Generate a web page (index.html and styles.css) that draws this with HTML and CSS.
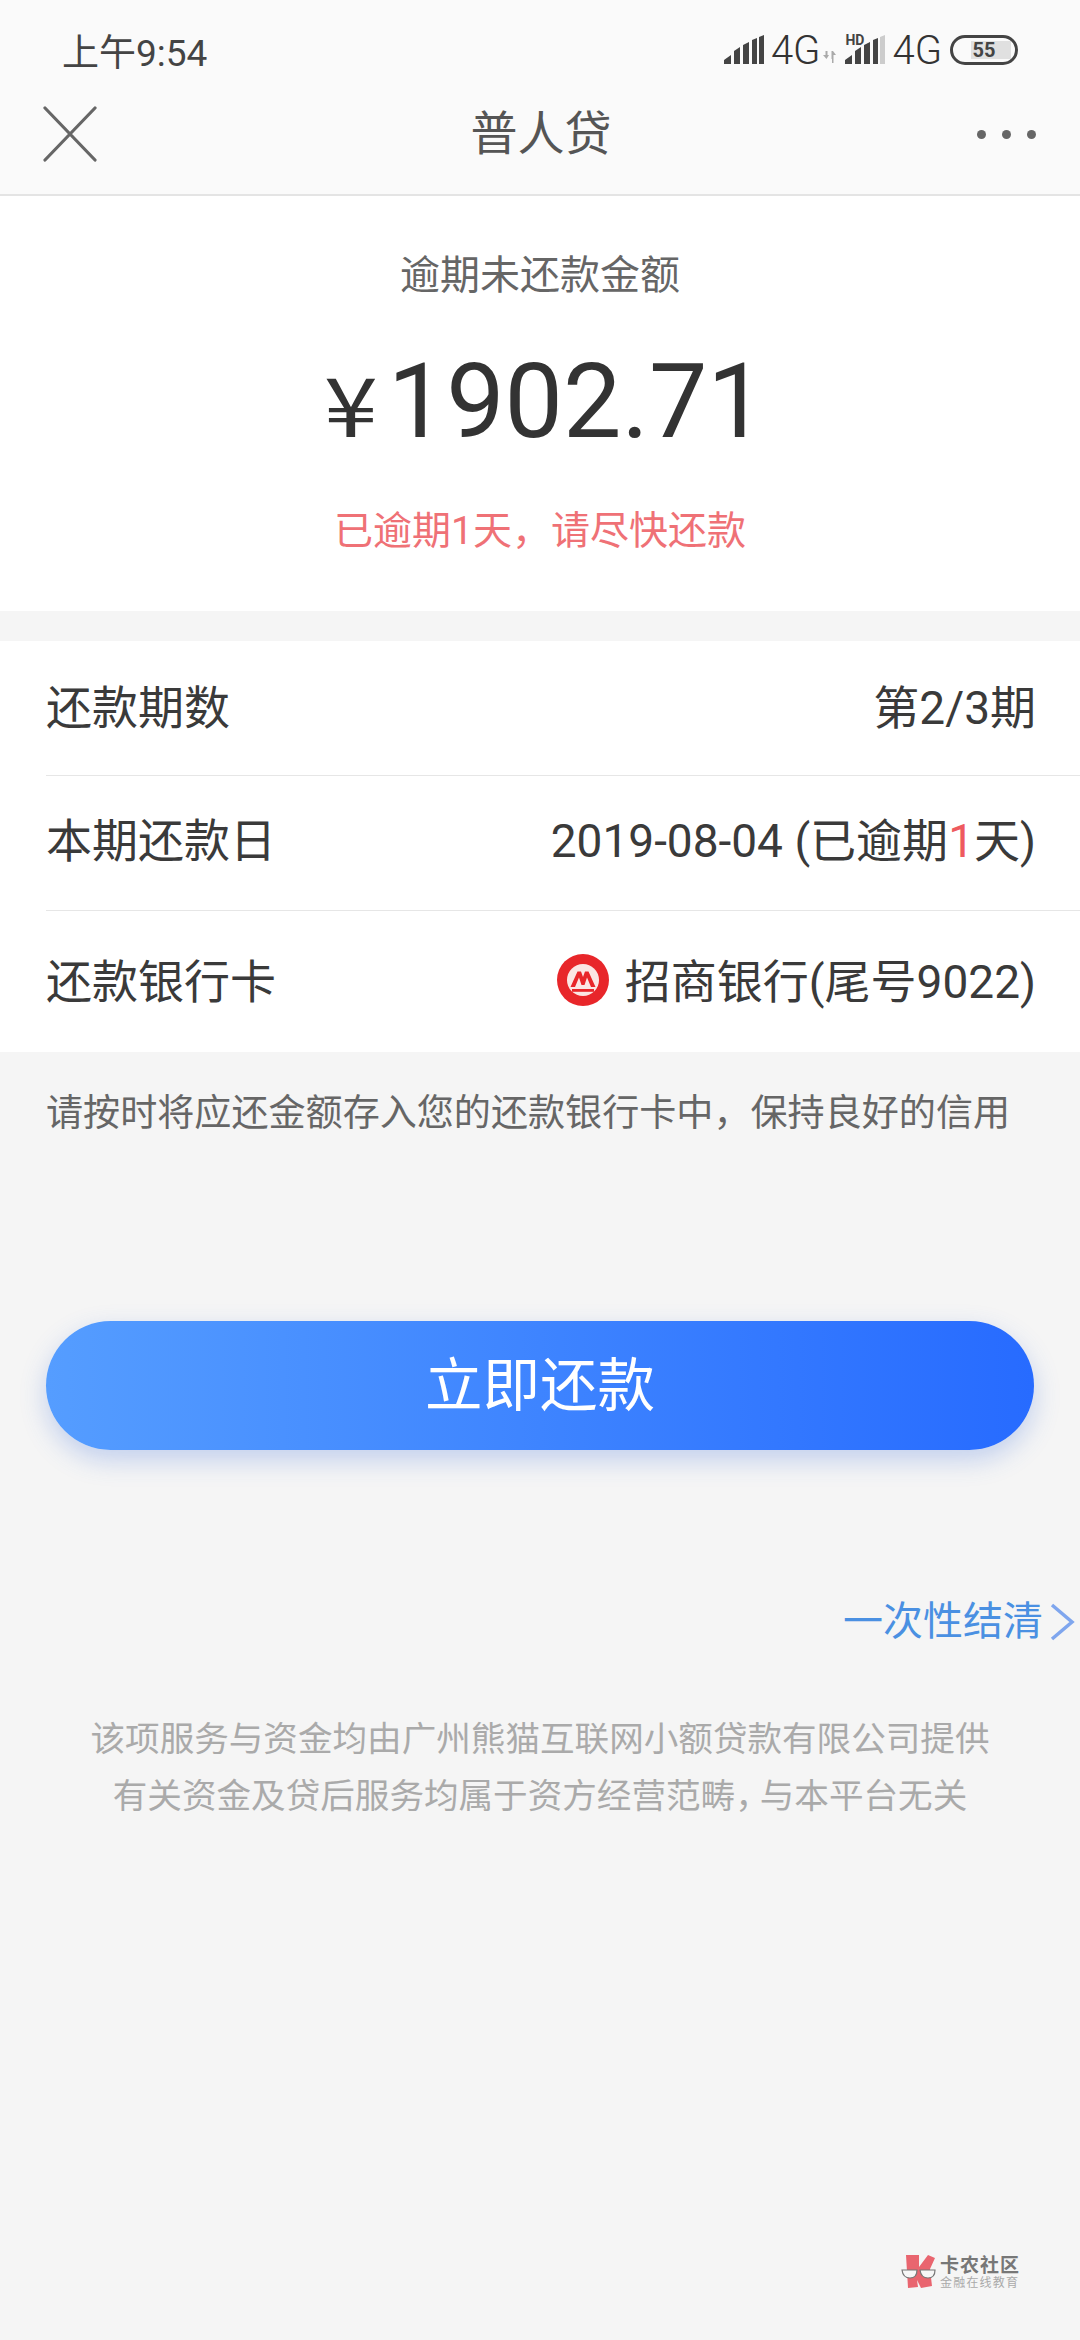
FILE: index.html
```html
<!DOCTYPE html>
<html lang="zh-CN">
<head>
<meta charset="utf-8">
<title>普人贷</title>
<link rel="stylesheet" href="styles.css">
</head>
<body>
<div class="page">
  <header class="top">
    <div class="status">
      <span class="time">上午9:54</span>
      <div class="status-right">
        <svg class="signal" width="40" height="29" viewBox="0 0 40 29"><path fill="#444" d="M0 29v-4l7-5v9zM10 29V16l6-4v17zM19 29V10l6-3v22zM28 29V5l5-2v26zM35 29V2l5-2v29z"/></svg>
        <span class="net">4G</span>
        <svg class="arrows" width="13" height="12" viewBox="0 0 13 12"><path fill="#aaa" d="M0 4h2.500V0h2v4H6L3.500 8zM7 8h1.500V0h1.500l3 4h-2.500v8H9V8z"/></svg>
        <div class="hd-signal">
          <span class="hd">HD</span>
          <svg class="signal-hd" width="40" height="29" viewBox="0 0 40 29"><path fill="#444" d="M0 29v-4l7-5v9zM10 29V16l6-4v17zM19 29V10l6-3v22zM28 29V5l5-2v26z"/><path fill="#ccc" d="M35 29V2l5-2v29z"/></svg>
        </div>
        <span class="net net-two">4G</span>
        <div class="battery"><span class="battery-num">55</span></div>
      </div>
    </div>
    <nav class="nav">
      <svg class="close" width="54" height="56" viewBox="0 0 54 56"><path d="M2 2l50 52M52 2L2 54" stroke="#666" stroke-width="3.200" stroke-linecap="round" fill="none"/></svg>
      <h1 class="title">普人贷</h1>
      <div class="dots"><i></i><i></i><i></i></div>
    </nav>
  </header>

  <section class="summary">
    <p class="summary-label">逾期未还款金额</p>
    <p class="amount"><span class="yen">¥</span><span class="digits">1902.71</span></p>
    <p class="overdue">已逾期1天，请尽快还款</p>
  </section>

  <section class="list">
    <div class="row"><span>还款期数</span><span>第2/3期</span></div>
    <div class="row row-date"><span>本期还款日</span><span>2019-08-04 (已逾期<em>1</em>天)</span></div>
    <div class="row row-last">
      <span>还款银行卡</span>
      <span class="bank">
        <svg class="bank-logo" width="52" height="52" viewBox="0 0 52 52">
          <circle cx="26" cy="26" r="26" fill="#e8262a"/>
          <circle cx="26" cy="26" r="16" fill="#fbe6e4"/>
          <path fill="#e8262a" d="M13.500 33L20.500 17.500h3.500L26 23l2-5.500h3.500L38.500 33h-4.500L30 23.500 27.500 31h-3L22 23.500 18 33z"/>
          <path fill="#e8262a" d="M15 35h22v2.800H15z"/>
        </svg>
        <span>招商银行(尾号9022)</span>
      </span>
    </div>
  </section>

  <p class="note">请按时将应还金额存入您的还款银行卡中，保持良好的信用</p>

  <button class="pay">立即还款</button>

  <div class="settle">
    <span>一次性结清</span>
    <svg class="chevron" width="25" height="38" viewBox="0 0 25 38"><path d="M2 2l20 17L2 36" stroke="#7fa6ee" stroke-width="3.500" fill="none"/></svg>
  </div>

  <p class="legal">该项服务与资金均由广州熊猫互联网小额贷款有限公司提供<br>有关资金及贷后服务均属于资方经营范畴<span class="tight">，</span>与本平台无关</p>

  <div class="watermark">
    <svg class="wm-logo" width="36" height="36" viewBox="0 0 36 36">
      <path fill="#e9656f" d="M5 1h13v12l9-12 7 3-5 11 2 17-11 2-4-8 1 7-10 1z"/>
      <path fill="#f7f7f7" stroke="#777" stroke-width="1.200" d="M1 16h15q0 8-7 8t-8-8zM19 16h15q0 8-7 8t-8-8z"/>
    </svg>
    <div class="wm-text">
      <span class="wm-name">卡农社区</span>
      <span class="wm-sub">金融在线教育</span>
    </div>
  </div>
</div>
</body>
</html>
```

FILE: styles.css
```css
* { box-sizing: border-box; }
html, body { margin: 0; padding: 0; }
body {
  background: #f5f5f5;
  font-family: Roboto, "Noto Sans CJK SC", sans-serif;
  color: #333;
}
.page { width: 1080px; height: 2340px; overflow: hidden; }
p, h1 { margin: 0; font-weight: 400; }

.top {
  height: 196px;
  background: #fafafa;
  border-bottom: 2px solid #e4e4e4;
}
.status {
  height: 100px;
  padding: 33px 62px 0 62px;
  display: flex;
  justify-content: space-between;
  align-items: flex-start;
}
.time { font-size: 37px; line-height: 42px; color: #444; }
.status-right { display: flex; align-items: flex-start; margin-top: 2px; margin-left: auto; }
.signal { display: block; }
.net { font-size: 40px; line-height: 32px; font-weight: 300; color: #333; margin-left: 7px; }
.net-two { margin-left: 7px; }
.arrows { margin: 16px 0 0 3px; }
.hd-signal { width: 40px; height: 29px; margin-left: 9px; display: flex; }
.hd { font-size: 14px; line-height: 12px; font-weight: 700; color: #444; margin-top: -1px; width: 0; }
.signal-hd { display: block; }
.battery {
  width: 68px;
  height: 30px;
  margin-left: 8px;
  border: 3px solid #444;
  border-radius: 15px;
  background: linear-gradient(#e0e0e0, #e0e0e0) 18px 3px / 40px 18px no-repeat;
  display: flex;
  align-items: center;
  justify-content: center;
}
.battery-num { font-size: 20px; font-weight: 700; line-height: 24px; color: #444; }

.nav {
  height: 94px;
  padding: 0 44px 26px 43px;
  display: grid;
  grid-template-columns: 1fr auto 1fr;
  align-items: center;
}
.close { display: block; }
.title { font-size: 47px; line-height: 60px; color: #555; margin-left: 3px; }
.dots { display: flex; gap: 16px; justify-self: end; }
.dots i { width: 9px; height: 9px; border-radius: 50%; background: #666; display: block; }

.summary {
  height: 415px;
  background: #fff;
  padding-top: 53px;
  text-align: center;
}
.summary-label { font-size: 40px; line-height: 54px; color: #666; }
.amount {
  margin-top: 34px;
  height: 130px;
  padding-left: 14px;
  display: flex;
  justify-content: center;
  align-items: baseline;
  line-height: 130px;
  color: #333;
}
.yen {
  font-family: "Noto Sans CJK SC", sans-serif;
  font-size: 82px;
  line-height: 130px;
  margin-right: 14px;
  transform: scaleX(1.18);
}
.digits { font-size: 104px; }
.overdue { margin-top: 37px; font-size: 39px; line-height: 54px; color: #ef7176; }

.list { margin-top: 30px; background: #fff; padding-left: 46px; height: 411px; }
.row {
  height: 135px;
  padding: 0 44px 9px 0;
  border-bottom: 1px solid #e6e6e6;
  display: flex;
  justify-content: space-between;
  align-items: center;
  font-size: 46px;
  color: #3a3a3a;
}
.row-date { padding-bottom: 13px; }
.row-last { height: 141px; border-bottom: 0; padding-bottom: 7px; }
.row em { font-style: normal; color: #ee5a5f; }
.bank { display: flex; align-items: center; gap: 16px; }
.bank-logo { display: block; margin-top: 4px; }

.note { margin: 37px 0 0 46px; font-size: 37.100px; line-height: 50px; color: #666; white-space: nowrap; }

.pay {
  display: block;
  width: 988px;
  height: 129px;
  margin: 182px 0 0 46px;
  padding: 0 0 10px;
  border: 0;
  border-radius: 65px;
  background: linear-gradient(90deg, #559dff, #276bff);
  box-shadow: 0 10px 26px rgba(60, 110, 220, 0.28);
  color: #fff;
  font-family: inherit;
  font-size: 57.500px;
}

.settle {
  margin-top: 145px;
  padding-right: 5px;
  display: flex;
  justify-content: flex-end;
  align-items: center;
  gap: 7px;
  font-size: 40px;
  line-height: 54px;
  color: #4a90e2;
}
.legal {
  margin-top: 62px;
  text-align: center;
  font-size: 34.600px;
  line-height: 57px;
  color: #aaa;
}
.tight { letter-spacing: -10px; }

.watermark { margin: 429px 0 0 901px; display: flex; align-items: flex-start; gap: 3px; }
.wm-logo { display: block; }
.wm-text { display: flex; flex-direction: column; padding-top: 2px; }
.wm-name { font-size: 19px; line-height: 20px; font-weight: 700; color: #777; letter-spacing: 1px; }
.wm-sub { font-size: 12px; line-height: 14px; color: #aaa; letter-spacing: 1.200px; }
```
